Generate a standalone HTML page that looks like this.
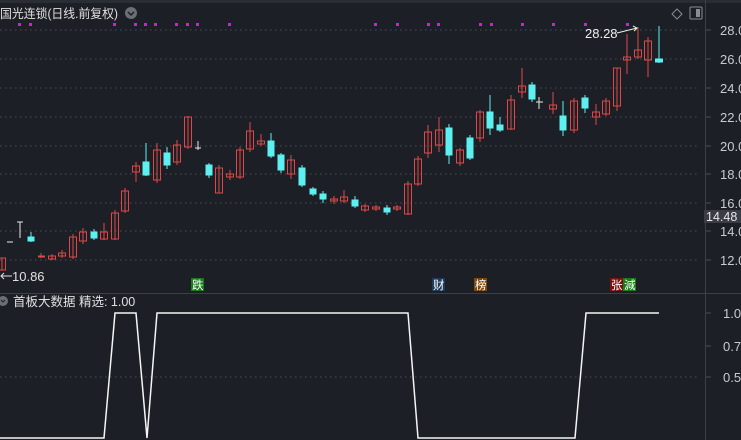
<!DOCTYPE html>
<html><head><meta charset="utf-8"><style>
html,body{margin:0;padding:0;background:#1c1f25;width:741px;height:440px;overflow:hidden}
svg{display:block}
text{font-family:"Liberation Sans","Noto Sans CJK SC",sans-serif}
</style></head><body>
<svg width="741" height="440" viewBox="0 0 741 440">
<rect width="741" height="440" fill="#1c1f25"/>
<rect width="741" height="3" fill="#2a2d34"/>
<g stroke="#4a4e57" stroke-width="1" stroke-dasharray="1.5,3.5">
<line x1="0" y1="30" x2="700" y2="30"/><line x1="0" y1="59" x2="700" y2="59"/><line x1="0" y1="88" x2="700" y2="88"/><line x1="0" y1="117" x2="700" y2="117"/><line x1="0" y1="146" x2="700" y2="146"/><line x1="0" y1="174" x2="700" y2="174"/><line x1="0" y1="203" x2="700" y2="203"/><line x1="0" y1="231" x2="700" y2="231"/><line x1="0" y1="260" x2="700" y2="260"/>
<line x1="0" y1="377" x2="700" y2="377"/>
</g>
<line x1="0" y1="293.5" x2="741" y2="293.5" stroke="#3d4048"/>
<line x1="705.5" y1="0" x2="705.5" y2="440" stroke="#3d4048"/>
<g stroke="#4a4e57"><line x1="706" y1="30" x2="711" y2="30"/><line x1="706" y1="59" x2="711" y2="59"/><line x1="706" y1="88" x2="711" y2="88"/><line x1="706" y1="117" x2="711" y2="117"/><line x1="706" y1="146" x2="711" y2="146"/><line x1="706" y1="174" x2="711" y2="174"/><line x1="706" y1="203" x2="711" y2="203"/><line x1="706" y1="231" x2="711" y2="231"/><line x1="706" y1="260" x2="711" y2="260"/><line x1="706" y1="313" x2="711" y2="313"/><line x1="706" y1="346" x2="711" y2="346"/><line x1="706" y1="377" x2="711" y2="377"/></g>
<g fill="#c8cbd0" font-size="13">
<text x="720" y="35">28.0</text><text x="720" y="64">26.0</text><text x="720" y="93">24.0</text><text x="720" y="122">22.0</text><text x="720" y="151">20.0</text><text x="720" y="179">18.0</text><text x="720" y="208">16.0</text><text x="720" y="236">14.0</text><text x="720" y="265">12.0</text>
<text x="723" y="318">1.0</text><text x="723" y="351">0.7</text><text x="723" y="382">0.5</text>
</g>
<rect x="704" y="210" width="37" height="13" fill="#3a3d45"/>
<text x="706" y="221" fill="#e8e8e8" font-size="12.5">14.48</text>
<text x="0" y="18" fill="#e0e0e0" font-size="12.5" textLength="118" lengthAdjust="spacingAndGlyphs">国光连锁(日线.前复权)</text>
<circle cx="131" cy="13" r="6" fill="#6b6e75"/><path d="M128 12l3 3 3-3" stroke="#1c1f25" stroke-width="1.5" fill="none"/>
<path d="M677 9l5 5-5 5-5-5z" stroke="#8a8d94" fill="none"/>
<rect x="690" y="7" width="12" height="12" rx="1" stroke="#8a8d94" fill="none"/><rect x="696" y="9" width="4" height="8" fill="#8a8d94"/>
<g fill="#d020d0">
<rect x="18" y="23" width="3" height="3"/><rect x="29" y="23" width="3" height="3"/><rect x="113" y="23" width="3" height="3"/><rect x="134" y="23" width="3" height="3"/><rect x="144" y="23" width="3" height="3"/><rect x="154" y="23" width="3" height="3"/><rect x="175" y="23" width="3" height="3"/><rect x="186" y="23" width="3" height="3"/><rect x="196" y="23" width="3" height="3"/><rect x="228" y="23" width="3" height="3"/>
<rect x="374" y="23" width="3" height="3"/><rect x="396" y="23" width="3" height="3"/><rect x="427" y="23" width="3" height="3"/><rect x="437" y="23" width="3" height="3"/><rect x="479" y="23" width="3" height="3"/><rect x="490" y="23" width="3" height="3"/><rect x="521" y="23" width="3" height="3"/><rect x="552" y="23" width="3" height="3"/><rect x="584" y="23" width="3" height="3"/><rect x="626" y="23" width="3" height="3"/>
</g>
<g stroke="#e04848" fill="none" stroke-width="1">
<path d="M2 258v12M41 253v5M52 254v6M62 250v8M73 234v25M83 228v16M104 223v17M115 210v30M125 188v25M136 162v20M157 143v40M177 140v25M188 116v33M219 165v28M230 170v10M240 147v32M250 122v30M261 134v12M291 155v24M334 196v8M344 190v13M365 204v8M376 205v6M397 205v6M408 181v34M418 156v30M428 125v33M439 117v35M460 148v18M480 110v32M511 95v35M522 68v30M553 92v22M574 98v35M596 104v21M606 98v18M617 68v43M627 34v40M638 27v32M648 37v40"/>
<rect x="-1.5" y="258" width="7" height="12"/><rect x="38.5" y="256" width="6" height="1"/><rect x="48.5" y="256" width="7" height="3"/><rect x="58.5" y="253" width="7" height="3"/><rect x="69.5" y="237" width="7" height="20"/><rect x="79.5" y="232" width="7" height="9"/><rect x="100.5" y="232" width="7" height="7"/><rect x="111.5" y="213" width="7" height="26"/><rect x="121.5" y="191" width="7" height="20"/><rect x="132.5" y="166" width="7" height="6"/><rect x="153.5" y="150" width="7" height="30"/><rect x="173.5" y="145" width="7" height="17"/><rect x="184.5" y="117" width="7" height="30"/><rect x="215.5" y="168" width="7" height="25"/><rect x="226.5" y="174" width="7" height="3"/><rect x="236.5" y="150" width="7" height="27"/><rect x="246.5" y="131" width="7" height="18"/><rect x="257.5" y="141" width="7" height="3"/><rect x="287.5" y="160" width="7" height="14"/><rect x="330.5" y="199" width="7" height="2"/><rect x="340.5" y="197" width="7" height="4"/><rect x="361.5" y="206" width="7" height="4"/><rect x="372.5" y="207" width="7" height="2"/><rect x="393.5" y="207" width="7" height="2"/><rect x="404.5" y="184" width="7" height="30"/><rect x="414.5" y="159" width="7" height="25"/><rect x="424.5" y="132" width="7" height="21"/><rect x="435.5" y="130" width="7" height="15"/><rect x="456.5" y="150" width="7" height="13"/><rect x="476.5" y="112" width="7" height="26"/><rect x="507.5" y="100" width="7" height="29"/><rect x="518.5" y="86" width="7" height="6"/><rect x="549.5" y="105" width="7" height="4"/><rect x="570.5" y="101" width="7" height="29"/><rect x="592.5" y="112" width="7" height="5"/><rect x="602.5" y="101" width="7" height="13"/><rect x="613.5" y="68" width="7" height="38"/><rect x="623.5" y="57" width="7" height="3"/><rect x="634.5" y="50" width="7" height="7"/><rect x="644.5" y="41" width="7" height="19"/>
</g>
<g stroke="#5ef0f0" fill="#5ef0f0">
<path d="M31 232v10M94 229v11M146 143v33M167 147v22M209 163v15M271 133v25M281 153v20M302 165v22M313 187v9M323 191v12M355 196v12M387 205v10M449 124v40M470 135v25M490 95v40M500 117v15M532 82v20M563 101v35M585 95v18M659 26v37"/>
<rect x="28" y="237" width="6" height="4"/><rect x="91" y="232" width="6" height="6"/><rect x="143" y="162" width="6" height="13"/><rect x="164" y="153" width="6" height="12"/><rect x="206" y="165" width="6" height="10"/><rect x="268" y="141" width="6" height="15"/><rect x="278" y="155" width="6" height="15"/><rect x="299" y="168" width="6" height="17"/><rect x="310" y="189" width="6" height="5"/><rect x="320" y="194" width="6" height="5"/><rect x="352" y="200" width="6" height="6"/><rect x="384" y="208" width="6" height="4"/><rect x="446" y="128" width="6" height="27"/><rect x="467" y="138" width="6" height="20"/><rect x="487" y="112" width="6" height="16"/><rect x="497" y="125" width="6" height="5"/><rect x="529" y="85" width="6" height="14"/><rect x="560" y="116" width="6" height="14"/><rect x="582" y="98" width="6" height="10"/><rect x="655.5" y="59" width="7" height="3"/>
</g>
<g stroke="#e8e8e8"><path d="M7 242h6M17 222h6M20 222v16M198 141v9M195 148h6M539 97v12M536 102h7"/></g>
<text x="585" y="38" fill="#f0f0f0" font-size="13">28.28</text>
<path d="M617 33l20-5m-4-2l4 2-3 3" stroke="#f0f0f0" fill="none"/>
<path d="M12 276h-11m3-3l-3 3 3 3" stroke="#e0e0e0" fill="none"/>
<text x="12" y="281" fill="#e0e0e0" font-size="13">10.86</text>
<rect x="191" y="278" width="13" height="13" fill="#1a7a1a"/><text x="192" y="289" fill="#fff" font-size="11.5">跌</text>
<rect x="432" y="278" width="13" height="13" fill="#1e3a5a"/><text x="433" y="289" fill="#fff" font-size="11.5">财</text>
<rect x="474" y="278" width="13" height="13" fill="#7a4a10"/><text x="475" y="289" fill="#fff" font-size="11.5">榜</text>
<rect x="610" y="278" width="13" height="13" fill="#7a1010"/><text x="611" y="289" fill="#fff" font-size="11.5">张</text>
<rect x="623" y="278" width="13" height="13" fill="#1a7a1a"/><text x="624" y="289" fill="#fff" font-size="11.5">減</text>
<circle cx="3" cy="301" r="5" fill="#6b6e75"/><path d="M1 300l2 2 2-2" stroke="#1c1f25" fill="none"/>
<text x="13" y="306" fill="#e0e0e0" font-size="12.5">首板大数据 精选: 1.00</text>
<path d="M0 438H104L115 313H136L147 438L157 313H408L418 438H575L586 313H659" stroke="#f5f5f5" stroke-width="1.5" fill="none"/>
</svg>
</body></html>
